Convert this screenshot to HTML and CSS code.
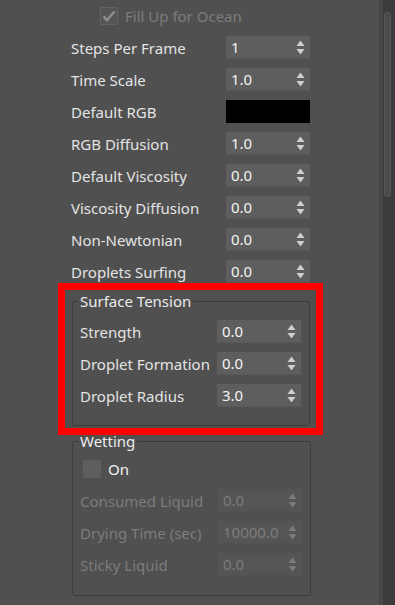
FILE: index.html
```html
<!DOCTYPE html>
<html>
<head>
    <title>Liquid Settings</title>
    <link rel="stylesheet" href="styles.css">
</head>
<body>
    <div id="panel">
        <div id="content">
            <div class="check disabled fill-up">
                <span class="box">
                    <svg width="14" height="12" viewBox="0 0 14 12"><path d="M1.5 6.5 L5 10 L12.5 1.5" fill="none" stroke="#8c8c8c" stroke-width="2.6"/></svg>
                </span>
                <span>Fill Up for Ocean</span>
            </div>

            <div class="rows">
                <div class="row"><span class="label">Steps Per Frame</span><div class="spinner"><span>1</span><i class="arrows"></i></div></div>
                <div class="row"><span class="label">Time Scale</span><div class="spinner"><span>1.0</span><i class="arrows"></i></div></div>
                <div class="row"><span class="label">Default RGB</span><div class="swatch"></div></div>
                <div class="row"><span class="label">RGB Diffusion</span><div class="spinner"><span>1.0</span><i class="arrows"></i></div></div>
                <div class="row"><span class="label">Default Viscosity</span><div class="spinner"><span>0.0</span><i class="arrows"></i></div></div>
                <div class="row"><span class="label">Viscosity Diffusion</span><div class="spinner"><span>0.0</span><i class="arrows"></i></div></div>
                <div class="row"><span class="label">Non-Newtonian</span><div class="spinner"><span>0.0</span><i class="arrows"></i></div></div>
                <div class="row"><span class="label">Droplets Surfing</span><div class="spinner"><span>0.0</span><i class="arrows"></i></div></div>
            </div>

            <div class="highlight">
                <fieldset class="group">
                    <legend>Surface Tension</legend>
                    <div class="rows">
                        <div class="row"><span class="label">Strength</span><div class="spinner"><span>0.0</span><i class="arrows"></i></div></div>
                        <div class="row"><span class="label">Droplet Formation</span><div class="spinner"><span>0.0</span><i class="arrows"></i></div></div>
                        <div class="row"><span class="label">Droplet Radius</span><div class="spinner"><span>3.0</span><i class="arrows"></i></div></div>
                    </div>
                </fieldset>
            </div>

            <fieldset class="group wetting">
                <legend>Wetting</legend>
                <div class="check on-check">
                    <span class="box"></span>
                    <span>On</span>
                </div>
                <div class="rows disabled">
                    <div class="row"><span class="label">Consumed Liquid</span><div class="spinner"><span>0.0</span><i class="arrows"></i></div></div>
                    <div class="row"><span class="label">Drying Time (sec)</span><div class="spinner"><span>10000.0</span><i class="arrows"></i></div></div>
                    <div class="row"><span class="label">Sticky Liquid</span><div class="spinner"><span>0.0</span><i class="arrows"></i></div></div>
                </div>
            </fieldset>
        </div>

        <div id="scrollbar">
            <div class="thumb"></div>
        </div>
    </div>

    <script>
        // spinner arrows are the same everywhere, so draw them once here
        const arrowSvg = '<svg width="9" height="15" viewBox="0 0 9 15">' +
            '<path d="M4.5 0.5 L8.5 6 L0.5 6 Z" fill="#cfcfcf"/>' +
            '<path d="M0.5 9 L8.5 9 L4.5 14.5 Z" fill="#cfcfcf"/></svg>';
        document.querySelectorAll(".arrows").forEach(function (el) {
            el.innerHTML = arrowSvg;
        });
    </script>
</body>
</html>
```

FILE: styles.css
```css
html, body {
    margin: 0;
    height: 605px;
    overflow: hidden;
}

body {
    background-color: #505050;
    color: #e4e4e4;
    font-family: "Noto Sans", "Liberation Sans", sans-serif;
    font-size: 15px;
}

#panel {
    display: flex;
    height: 605px;
}

#content {
    flex: 1;
    padding: 7px 0 0 71px;
}

#content > * {
    width: 239px;
}

/* checkboxes */
.check {
    display: flex;
    align-items: center;
    gap: 7px;
    height: 18px;
    line-height: 18px;
}

.check .box {
    width: 18px;
    height: 18px;
    background-color: #5e5e5e;
    display: flex;
    align-items: center;
    justify-content: center;
}

.fill-up {
    margin: 0 0 11px 29px;
}

.fill-up .box {
    box-sizing: border-box;
    border: 1px solid #626262;
    background-color: #555;
}

.disabled,
.disabled .spinner span {
    color: #7c7c7c;
}

.on-check {
    margin: 0 0 11px 3px;
    gap: 7px;
}

.on-check span:last-child {
    color: #f2f2f2;
}

/* rows of label + field */
.rows {
    display: flex;
    flex-direction: column;
    gap: 9px;
}

.row {
    display: flex;
    align-items: center;
    justify-content: space-between;
    height: 23px;
}

.label {
    white-space: nowrap;
}

.spinner {
    width: 84px;
    height: 23px;
    box-sizing: border-box;
    background-color: #5e5e5e;
    border-bottom: 1px solid #575757;
    display: flex;
    align-items: center;
    justify-content: space-between;
    padding: 0 5px 0 5px;
    color: #f4f4f4;
}

.arrows {
    display: flex;
    margin-top: 1px;
}

.disabled .spinner {
    background-color: #555;
    border-bottom-color: #505050;
}

.disabled .arrows svg path {
    fill: #7c7c7c;
}

.swatch {
    width: 84px;
    height: 23px;
    background-color: #000;
}

/* group boxes */
.group {
    margin: 0 0 0 1px;
    padding: 10px 8px 18px 7px;
    border: 1px solid #3c3c3c;
    border-radius: 3px;
    min-inline-size: 0;
    width: 238px;
    box-sizing: border-box;
}

.group legend {
    padding: 0 2px;
    margin-left: -2px;
    line-height: 18px;
    color: #ececec;
}

.highlight {
    border: 7px solid #ff0000;
    margin-left: -13px;
    padding: 2px 6px 2px 6px;
}

.wetting {
    margin-top: -3px;
    padding-bottom: 19px;
}

/* scrollbar */
#scrollbar {
    width: 16px;
    background-color: #3b3b3b;
    box-shadow: inset 1px 0 #444, inset 4px 0 #484848;
    padding-top: 12px;
}

.thumb {
    margin-left: 5px;
    width: 7px;
    height: 185px;
    box-sizing: border-box;
    background-color: #4b4b4b;
    border: 1px solid #575757;
    border-radius: 3px;
}
```
